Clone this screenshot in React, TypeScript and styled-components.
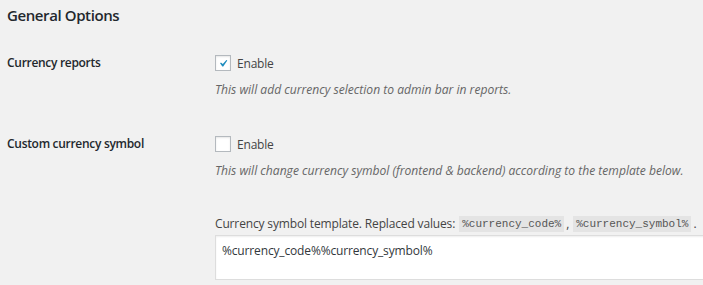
import React from 'react'
import styled, { createGlobalStyle } from 'styled-components'

const GlobalStyle = createGlobalStyle`
  html, body {
    margin: 0;
    padding: 0;
    background: #f1f1f1;
    overflow: hidden;
  }
  body {
    font-family: 'Open Sans', 'Noto Sans', sans-serif;
    font-size: 12px;
    color: #23282d;
  }
`

const Page = styled.div`
  width: 703px;
  height: 285px;
  padding-left: 7px;
  box-sizing: border-box;
  overflow: hidden;
`

const Title = styled.h2`
  margin: 0;
  padding-top: 4px;
  font-size: 15px;
  font-weight: 600;
  letter-spacing: -0.4px;
  line-height: 22px;
  color: #23282d;
`

const Row = styled.div<{ $top: number }>`
  display: grid;
  grid-template-columns: 208px 1fr;
  margin-top: ${(p) => p.$top}px;
`

const Label = styled.div`
  font-size: 12px;
  font-weight: 600;
  letter-spacing: -0.3px;
  line-height: 16px;
  color: #23282d;
`

const Field = styled.div`
  display: flex;
  flex-direction: column;
  min-width: 0;
`

const CheckLine = styled.label`
  display: flex;
  align-items: center;
  gap: 6px;
  height: 16px;
  color: #444;
  letter-spacing: -0.2px;
`

const Box = styled.span<{ $checked?: boolean }>`
  width: 16px;
  height: 16px;
  box-sizing: border-box;
  background: #fff;
  border: 1px solid #b4b9be;
  box-shadow: inset 0 1px 2px rgba(0, 0, 0, 0.1);
  display: flex;
  align-items: center;
  justify-content: center;
  svg {
    display: ${(p) => (p.$checked ? 'block' : 'none')};
  }
`

const Description = styled.p<{ $top: number }>`
  margin: ${(p) => p.$top}px 0 0;
  font-size: 12.1px;
  font-style: italic;
  color: #666;
  line-height: 20px;
  white-space: nowrap;
`

const TemplateLabel = styled.div`
  margin-top: 33px;
  display: flex;
  align-items: center;
  line-height: 20px;
  color: #444;
  letter-spacing: -0.15px;
  white-space: nowrap;
`

const Code = styled.code`
  font-family: 'Liberation Mono', 'DejaVu Sans Mono', monospace;
  font-size: 11px;
  letter-spacing: 0;
  background: #e4e4e4;
  color: #555;
  padding: 0 3px;
  line-height: 16px;
  margin: 0 2px 0 4px;
`

const TextArea = styled.div`
  margin-top: 1px;
  width: 520px;
  height: 45px;
  box-sizing: border-box;
  background: #fff;
  border: 1px solid #ddd;
  box-shadow: inset 0 1px 2px rgba(0, 0, 0, 0.07);
  padding: 5px 6px;
  line-height: 20px;
  letter-spacing: -0.15px;
  color: #32373c;
`

function Checkbox({ checked }: { checked?: boolean }) {
  return (
    <Box $checked={checked}>
      <svg width="17" height="17" viewBox="0 0 20 20">
        <path d="M14.83 4.89l1.34.94-5.81 8.38H9.02L5.78 9.67l1.34-1.25 2.57 2.4z" fill="#1e8cbe" />
      </svg>
    </Box>
  )
}

export default function App() {
  return (
    <>
      <GlobalStyle />
      <Page>
        <Title>General Options</Title>
        <Row $top={29}>
          <Label>Currency reports</Label>
          <Field>
            <CheckLine>
              <Checkbox checked />
              Enable
            </CheckLine>
            <Description $top={9}>This will add currency selection to admin bar in reports.</Description>
          </Field>
        </Row>
        <Row $top={36}>
          <Label>Custom currency symbol</Label>
          <Field>
            <CheckLine>
              <Checkbox />
              Enable
            </CheckLine>
            <Description $top={9}>
              This will change currency symbol (frontend &amp; backend) according to the template below.
            </Description>
            <TemplateLabel>
              Currency symbol template. Replaced values: <Code>%currency_code%</Code>,
              <Code>%currency_symbol%</Code>.
            </TemplateLabel>
            <TextArea>%currency_code%%currency_symbol%</TextArea>
          </Field>
        </Row>
      </Page>
    </>
  )
}
